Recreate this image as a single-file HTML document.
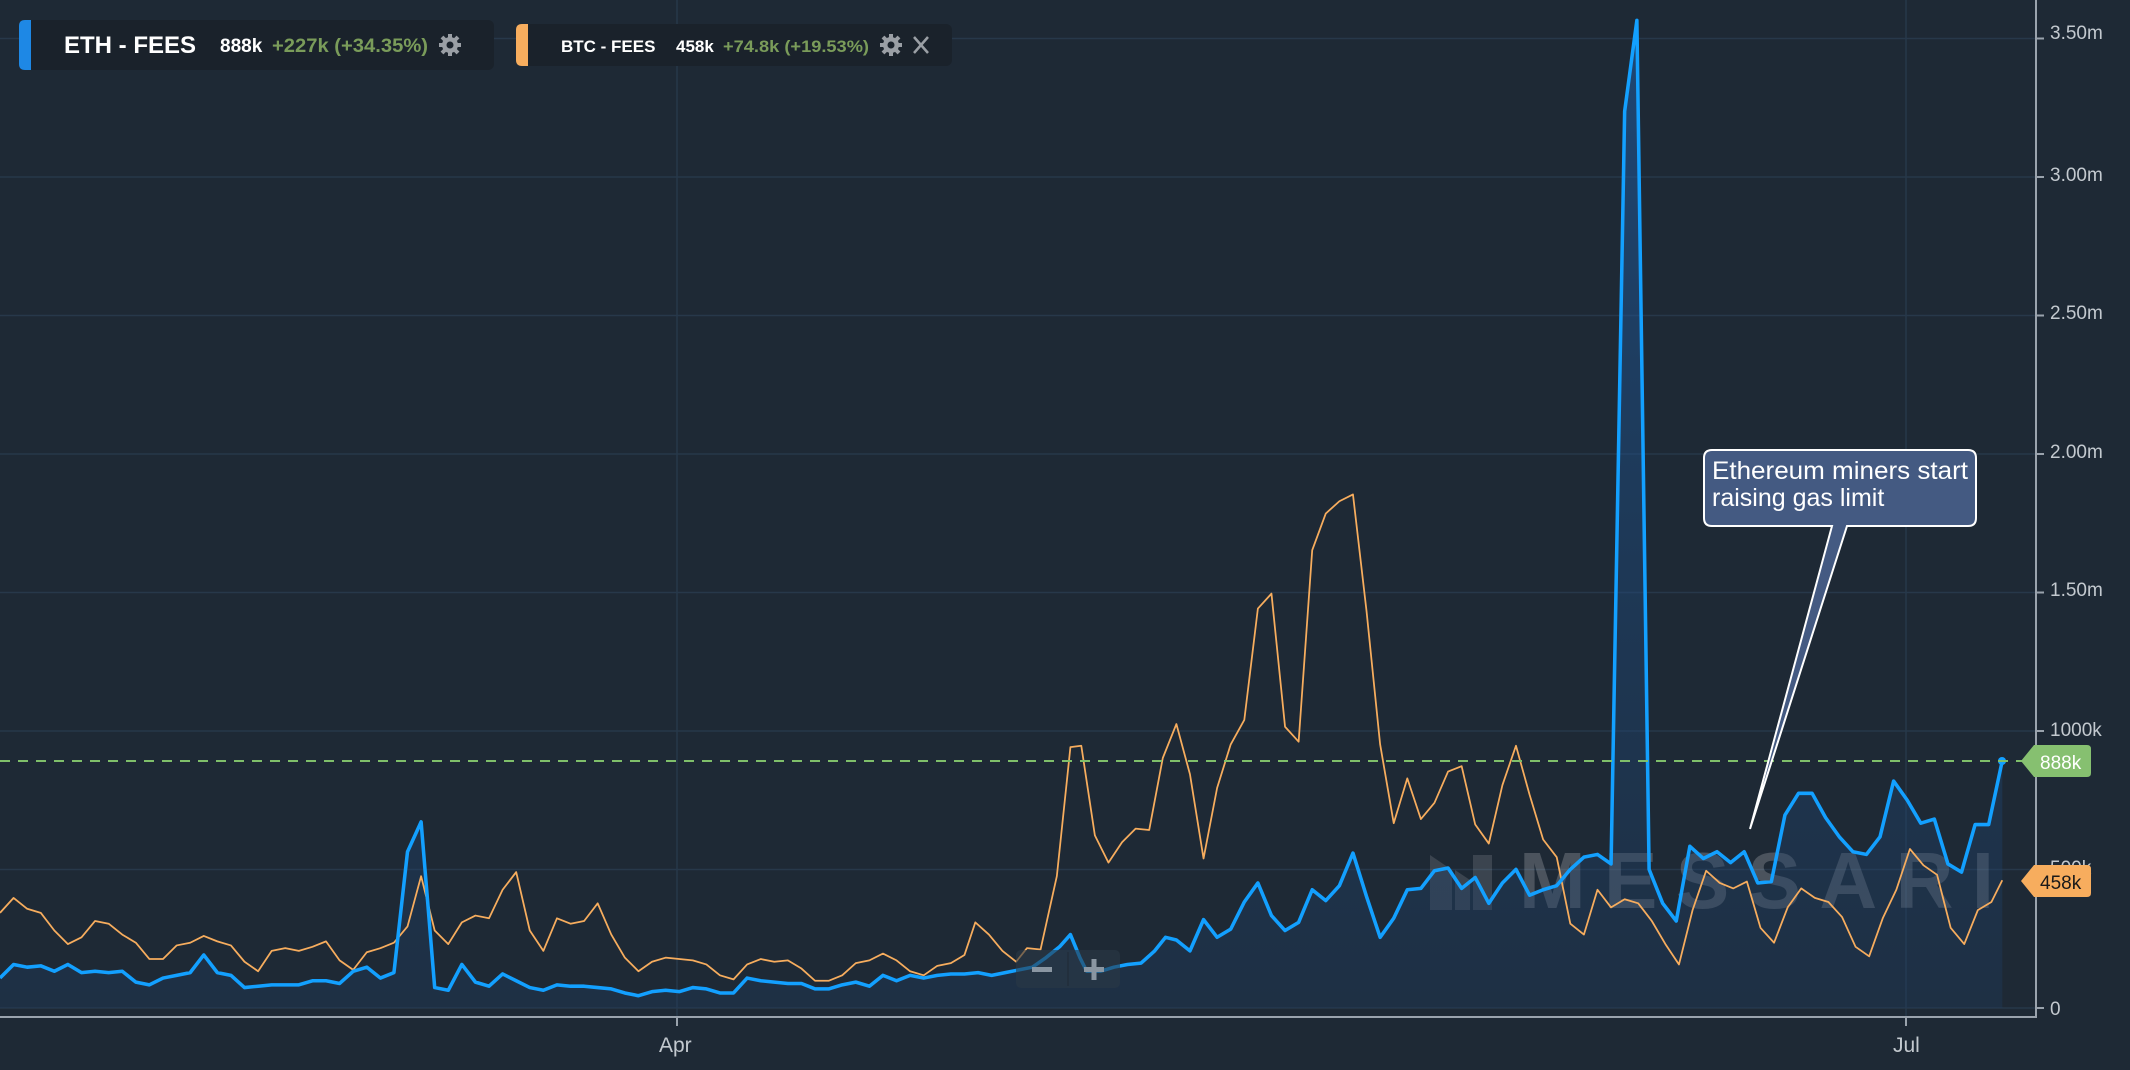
<!DOCTYPE html>
<html><head><meta charset="utf-8"><style>
html,body{margin:0;padding:0;background:#1e2935;width:2130px;height:1070px;overflow:hidden;font-family:"Liberation Sans",sans-serif}
svg{position:absolute;left:0;top:0}
</style></head><body>
<svg width="2130" height="1070" viewBox="0 0 2130 1070" xmlns="http://www.w3.org/2000/svg">
<defs>
<linearGradient id="g" x1="0" y1="0" x2="0" y2="1"><stop offset="0" stop-color="#1f5fa8" stop-opacity="0.55"/><stop offset="1" stop-color="#1f3c60" stop-opacity="0.35"/></linearGradient>
</defs>
<rect width="2130" height="1070" fill="#1e2935"/>
<g stroke="#27384a" stroke-width="1.5">
<line x1="0" y1="869.5" x2="2036" y2="869.5"/><line x1="0" y1="731" x2="2036" y2="731"/>
<line x1="0" y1="592.5" x2="2036" y2="592.5"/><line x1="0" y1="454" x2="2036" y2="454"/>
<line x1="0" y1="315.5" x2="2036" y2="315.5"/><line x1="0" y1="177" x2="2036" y2="177"/>
<line x1="0" y1="38.5" x2="2036" y2="38.5"/><line x1="0" y1="1008" x2="2036" y2="1008"/>
<line x1="677" y1="0" x2="677" y2="1017"/><line x1="1906" y1="0" x2="1906" y2="1017"/>
</g>
<g font-size="80" font-weight="bold" fill="#ffffff" fill-opacity="0.2">
<text x="1519" y="908" textLength="475" lengthAdjust="spacing">MESSARI</text>
</g>
<g fill="#ffffff" fill-opacity="0.13"><polygon points="1430,855 1452,870 1452,910 1430,910"/><polygon points="1455,870 1470,880 1470,910 1455,910"/><polygon points="1473,855 1492,855 1492,910 1473,910"/></g>
<g transform="scale(1.3584)">
<path fill="url(#g)" d="M0,720 L10,710 20,712 30,711 40,715 50,710 60,716 70,715 80,716 90,715 100,723 110,725 120,720 130,718 140,716 150,703 160,716 170,718 180,727 190,726 200,725 210,725 220,725 230,722 240,722 250,724 260,715 270,712 280,720 290,716 300,627 310,605 320,727 330,729 340,710 350,723 360,726 370,717 380,722 390,727 400,729 410,725 420,726 430,726 440,727 450,728 460,731 470,733 480,730 490,729 500,730 510,727 520,728 530,731 540,731 550,720 560,722 570,723 580,724 590,724 600,728 610,728 620,725 630,723 640,726 650,718 660,722 670,718 680,720 690,718 700,717 710,717 720,716 730,718 740,716 750,714 760,712 770,705 780,697 788,688 795,705 800,715 810,715 820,712 830,710 840,709 850,700 858,690 866,692 876,700 886,677 896,690 906,684 916,664 926,650 936,674 946,685 956,679 966,655 976,663 986,652 996,628 1006,660 1016,690 1026,676 1036,655 1046,654 1056,641 1066,639 1076,654 1086,646 1096,665 1106,650 1116,640 1126,659 1136,655 1146,652 1156,640 1166,631 1176,629 1186,636 1196,82 1205,15 1214,640 1224,665 1234,678 1244,623 1254,632 1264,627 1274,635 1284,627 1294,650 1304,649 1314,600 1324,584 1334,584 1344,602 1354,616 1364,627 1374,629 1384,616 1394,575 1404,589 1414,606 1424,603 1434,636 1444,642 1454,607 1464,607 1474,560 L1474,742 L0,742 Z"/>
<polyline fill="none" stroke="#f7ad5e" stroke-width="1.3" stroke-linejoin="round" points="0,672 10,661 20,669 30,672 40,685 50,695 60,690 70,678 80,680 90,688 100,694 110,706 120,706 130,696 140,694 150,689 160,693 170,696 180,708 190,715 200,700 210,698 220,700 230,697 240,693 250,707 260,714 270,701 280,698 290,694 300,682 310,645 320,685 330,695 340,679 350,674 360,676 370,655 380,642 390,685 400,700 410,676 420,680 430,678 440,665 450,688 460,705 470,715 480,708 490,705 500,706 510,707 520,710 530,718 540,721 550,710 560,706 570,708 580,707 590,713 600,722 610,722 620,718 630,709 640,707 650,702 660,707 670,715 680,718 690,711 700,709 710,703 718,679 728,688 738,700 748,708 756,698 766,699 778,645 788,550 796,549 806,615 816,635 826,620 836,610 846,611 856,558 866,533 876,570 886,632 896,580 906,548 916,530 926,448 936,437 946,535 956,546 966,405 976,378 986,369 996,364 1006,450 1016,548 1026,606 1036,573 1046,603 1056,591 1066,568 1076,564 1086,607 1096,621 1106,578 1116,549 1126,585 1136,618 1146,631 1156,680 1166,688 1176,655 1186,668 1196,662 1206,665 1216,678 1226,695 1236,710 1246,670 1256,641 1266,650 1276,654 1286,649 1296,683 1306,694 1316,668 1326,654 1336,661 1346,664 1356,675 1366,697 1376,704 1386,676 1396,655 1406,625 1416,637 1426,644 1436,683 1446,695 1456,670 1466,664 1474,648"/>
<polyline fill="none" stroke="#13a0ff" stroke-width="2.6" stroke-linejoin="round" points="0,720 10,710 20,712 30,711 40,715 50,710 60,716 70,715 80,716 90,715 100,723 110,725 120,720 130,718 140,716 150,703 160,716 170,718 180,727 190,726 200,725 210,725 220,725 230,722 240,722 250,724 260,715 270,712 280,720 290,716 300,627 310,605 320,727 330,729 340,710 350,723 360,726 370,717 380,722 390,727 400,729 410,725 420,726 430,726 440,727 450,728 460,731 470,733 480,730 490,729 500,730 510,727 520,728 530,731 540,731 550,720 560,722 570,723 580,724 590,724 600,728 610,728 620,725 630,723 640,726 650,718 660,722 670,718 680,720 690,718 700,717 710,717 720,716 730,718 740,716 750,714 760,712 770,705 780,697 788,688 795,705 800,715 810,715 820,712 830,710 840,709 850,700 858,690 866,692 876,700 886,677 896,690 906,684 916,664 926,650 936,674 946,685 956,679 966,655 976,663 986,652 996,628 1006,660 1016,690 1026,676 1036,655 1046,654 1056,641 1066,639 1076,654 1086,646 1096,665 1106,650 1116,640 1126,659 1136,655 1146,652 1156,640 1166,631 1176,629 1186,636 1196,82 1205,15 1214,640 1224,665 1234,678 1244,623 1254,632 1264,627 1274,635 1284,627 1294,650 1304,649 1314,600 1324,584 1334,584 1344,602 1354,616 1364,627 1374,629 1384,616 1394,575 1404,589 1414,606 1424,603 1434,636 1444,642 1454,607 1464,607 1474,560"/>
</g>
<circle cx="2002" cy="761" r="4" fill="#13a0ff"/>
<line x1="0" y1="761" x2="2030" y2="761" stroke="#7fbf6a" stroke-width="2" stroke-dasharray="10,8"/>
<rect x="1016" y="950" width="104" height="38" rx="5" fill="#2a3846" fill-opacity="0.6"/>
<line x1="1068" y1="952" x2="1068" y2="986" stroke="#1e2935" stroke-width="1"/>
<rect x="1032" y="967" width="20" height="5" fill="#8a96a2"/>
<rect x="1084" y="967" width="20" height="5" fill="#8a96a2"/><rect x="1091.5" y="959" width="5" height="21" fill="#8a96a2"/>
<path d="M1712,450 H1968 Q1976,450 1976,458 V518 Q1976,526 1968,526 H1847 L1750,829 L1832,526 H1712 Q1704,526 1704,518 V458 Q1704,450 1712,450 Z" fill="#445a82" stroke="#ffffff" stroke-width="2"/>
<text x="1712" y="479" font-size="25" fill="#ffffff" textLength="256" lengthAdjust="spacingAndGlyphs">Ethereum miners start</text>
<text x="1712" y="506" font-size="25" fill="#ffffff">raising gas limit</text>
<line x1="2036" y1="0" x2="2036" y2="1017" stroke="#9aa3ad" stroke-width="2"/>
<line x1="0" y1="1017" x2="2037" y2="1017" stroke="#9aa3ad" stroke-width="2"/>
<g stroke="#9aa3ad" stroke-width="2"><line x1="2036" y1="38.5" x2="2044" y2="38.5"/><line x1="2036" y1="177" x2="2044" y2="177"/><line x1="2036" y1="315.5" x2="2044" y2="315.5"/><line x1="2036" y1="454" x2="2044" y2="454"/><line x1="2036" y1="592.5" x2="2044" y2="592.5"/><line x1="2036" y1="731" x2="2044" y2="731"/><line x1="2036" y1="869.5" x2="2044" y2="869.5"/><line x1="2036" y1="1008" x2="2044" y2="1008"/><line x1="677" y1="1017" x2="677" y2="1026"/><line x1="1906" y1="1017" x2="1906" y2="1026"/></g>
<g font-size="19" fill="#c3c9cf">
<text x="2050" y="39">3.50m</text><text x="2050" y="181">3.00m</text><text x="2050" y="319">2.50m</text><text x="2050" y="458">2.00m</text><text x="2050" y="596">1.50m</text><text x="2050" y="736">1000k</text><text x="2050" y="874">500k</text><text x="2050" y="1015">0</text>
</g>
<g font-size="21" fill="#c3c9cf"><text x="659" y="1052">Apr</text><text x="1893" y="1052">Jul</text></g>
<path d="M2021,761 L2034,745 H2087 Q2091,745 2091,749 V773 Q2091,777 2087,777 H2034 Z" fill="#86c070"/>
<text x="2040" y="769" font-size="19" fill="#ffffff">888k</text>
<path d="M2021,881 L2034,865 H2087 Q2091,865 2091,869 V893 Q2091,897 2087,897 H2034 Z" fill="#f7ad5e"/>
<text x="2040" y="889" font-size="19" fill="#1a1a1a">458k</text>
<rect x="19" y="20" width="475" height="50" rx="6" fill="#1a222b"/>
<path d="M25,20 H31 V70 H25 Q19,70 19,64 V26 Q19,20 25,20 Z" fill="#1e88e5"/>
<text x="64" y="53" font-size="24" font-weight="bold" fill="#ffffff">ETH - FEES</text>
<text x="220" y="52" font-size="19" font-weight="bold" fill="#ffffff">888k</text>
<text x="272" y="52" font-size="19" font-weight="bold" fill="#7a9c5a" textLength="156" lengthAdjust="spacingAndGlyphs">+227k (+34.35%)</text>
<g transform="translate(450,45)" fill="#9a9fa5"><circle r="8"/><g stroke="#9a9fa5" stroke-width="4"><line x1="0" y1="-11" x2="0" y2="11"/><line x1="-11" y1="0" x2="11" y2="0"/><line x1="-8" y1="-8" x2="8" y2="8"/><line x1="-8" y1="8" x2="8" y2="-8"/></g><circle r="3.5" fill="#1a222b"/></g>
<rect x="516" y="24" width="436" height="42" rx="6" fill="#1a222b"/>
<path d="M522,24 H528 V66 H522 Q516,66 516,60 V30 Q516,24 522,24 Z" fill="#f7ad5e"/>
<text x="561" y="52" font-size="17" font-weight="bold" fill="#ffffff">BTC - FEES</text>
<text x="676" y="52" font-size="17" font-weight="bold" fill="#ffffff">458k</text>
<text x="723" y="52" font-size="17" font-weight="bold" fill="#7a9c5a" textLength="146" lengthAdjust="spacingAndGlyphs">+74.8k (+19.53%)</text>
<g transform="translate(891,45)" fill="#9a9fa5"><circle r="8"/><g stroke="#9a9fa5" stroke-width="4"><line x1="0" y1="-11" x2="0" y2="11"/><line x1="-11" y1="0" x2="11" y2="0"/><line x1="-8" y1="-8" x2="8" y2="8"/><line x1="-8" y1="8" x2="8" y2="-8"/></g><circle r="3.5" fill="#1a222b"/></g>
<g stroke="#9a9fa5" stroke-width="2.5"><line x1="914" y1="37" x2="928" y2="53"/><line x1="928" y1="37" x2="914" y2="53"/></g>
</svg>
</body></html>
